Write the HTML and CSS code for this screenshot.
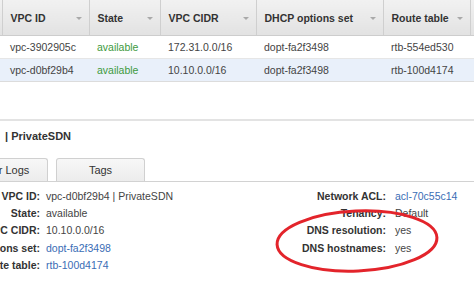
FILE: index.html
```html
<!DOCTYPE html>
<html lang="en">
<head>
  <meta charset="UTF-8">
  <meta name="viewport" content="width=device-width, initial-scale=1.0">
  <title>Your VPCs</title>
  <link rel="stylesheet" href="styles.css">
</head>
<body>
  <table class="vpcTable">
    <colgroup>
      <col class="colEdge">
      <col class="colId">
      <col class="colState">
      <col class="colCidr">
      <col class="colDhcp">
      <col class="colRoute">
      <col class="colMore">
    </colgroup>
    <thead>
      <tr>
        <th></th>
        <th>VPC ID<span class="sortArrow"></span></th>
        <th>State<span class="sortArrow"></span></th>
        <th>VPC CIDR<span class="sortArrow"></span></th>
        <th>DHCP options set<span class="sortArrow"></span></th>
        <th>Route table<span class="sortArrow"></span></th>
        <th></th>
      </tr>
    </thead>
    <tbody>
      <tr>
        <td></td>
        <td>vpc-3902905c</td>
        <td class="available">available</td>
        <td>172.31.0.0/16</td>
        <td>dopt-fa2f3498</td>
        <td>rtb-554ed530</td>
        <td></td>
      </tr>
      <tr class="selected">
        <td></td>
        <td>vpc-d0bf29b4</td>
        <td class="available">available</td>
        <td>10.10.0.0/16</td>
        <td>dopt-fa2f3498</td>
        <td>rtb-100d4174</td>
        <td></td>
      </tr>
    </tbody>
  </table>

  <div class="detailPanel">
    <div class="panelTitle">| PrivateSDN</div>

    <div class="tabs">
      <div class="tab tabFirst">r Logs</div>
      <div class="tab">Tags</div>
    </div>

    <div class="details">
      <dl class="detailList leftList">
        <dt>VPC ID:</dt>
        <dd>vpc-d0bf29b4 | PrivateSDN</dd>
        <dt>State:</dt>
        <dd>available</dd>
        <dt>VPC CIDR:</dt>
        <dd>10.10.0.0/16</dd>
        <dt>DHCP options set:</dt>
        <dd><a href="#">dopt-fa2f3498</a></dd>
        <dt>Route table:</dt>
        <dd><a href="#">rtb-100d4174</a></dd>
      </dl>

      <dl class="detailList rightList">
        <dt>Network ACL:</dt>
        <dd><a href="#">acl-70c55c14</a></dd>
        <dt>Tenancy:</dt>
        <dd>Default</dd>
        <dt>DNS resolution:</dt>
        <dd>yes</dd>
        <dt>DNS hostnames:</dt>
        <dd>yes</dd>
      </dl>
    </div>
  </div>

  <!-- red marker drawn over the DNS settings -->
  <svg class="highlight" width="170" height="74" viewBox="0 0 170 74">
    <ellipse cx="84" cy="37" rx="80" ry="30" transform="rotate(-2.5 84 37)"
             fill="none" stroke="#e3242b" stroke-width="3"/>
  </svg>
</body>
</html>
```

FILE: styles.css
```css
body {
  margin: 0;
  width: 474px;
  height: 290px;
  overflow: hidden;
  position: relative;
  background: #fff;
  font-family: "Liberation Sans", Arial, sans-serif;
  font-size: 10.5px;
  color: #444;
}

a {
  color: #3a6db5;
  text-decoration: none;
}

/* VPC list */
.vpcTable {
  table-layout: fixed;
  border-collapse: collapse;
  width: 478px;
}

.colEdge { width: 2px; }
.colId { width: 87px; }
.colState { width: 71px; }
.colCidr { width: 96px; }
.colDhcp { width: 127px; }
.colRoute { width: 87px; }
.colMore { width: 8px; }

.vpcTable th {
  height: 35px;
  padding: 0 0 0 8px;
  text-align: left;
  font-weight: bold;
  color: #333;
  white-space: nowrap;
  background: linear-gradient(#f1f1f1, #e2e2e2);
  border-left: 1px solid #cfcfcf;
  border-bottom: 1px solid #cdcdcd;
}

.vpcTable th:first-child {
  border-left: none;
  padding: 0;
}

.sortArrow {
  float: right;
  margin: 5px 7px 0 0;
  width: 0;
  height: 0;
  border-left: 3px solid transparent;
  border-right: 3px solid transparent;
  border-top: 3px solid #a9a9a9;
}

.vpcTable td {
  height: 22px;
  padding: 0 0 0 8px;
  white-space: nowrap;
  overflow: hidden;
  color: #444;
  border-bottom: 1px solid #e6e6e6;
}

.vpcTable td:first-child {
  padding: 0;
}

.vpcTable .selected td {
  background: #e9f0fa;
  border-bottom-color: #dcdcdc;
}

.vpcTable .available {
  color: #3d9a3d;
}

/* details panel */
.detailPanel {
  margin-top: 37px;
  border-top: 2px solid #e3e3e3;
}

.panelTitle {
  padding: 9px 0 0 5px;
  height: 28px;
  font-size: 11px;
  font-weight: bold;
  color: #333;
}

.tabs {
  display: flex;
  align-items: flex-end;
  height: 23px;
  border-bottom: 1px solid #d2d2d2;
}

.tab {
  width: 87px;
  height: 22px;
  line-height: 22px;
  margin-left: 8px;
  text-align: center;
  font-size: 11px;
  color: #333;
  background: linear-gradient(#f7f7f7, #ececec);
  border: 1px solid #d0d0d0;
  border-bottom: none;
  border-radius: 3px 3px 0 0;
}

.tabFirst {
  width: 66px;
  margin-left: -20px;
}

.details {
  display: flex;
  align-items: flex-start;
  justify-content: space-between;
  padding-top: 6px;
}

.detailList {
  display: grid;
  column-gap: 6px;
  margin: 0;
  line-height: 17.2px;
}

.detailList dt {
  text-align: right;
  font-weight: bold;
  color: #333;
  white-space: nowrap;
}

.detailList dd {
  margin: 0;
  white-space: nowrap;
}

.leftList {
  grid-template-columns: 140px auto;
  margin-left: -100px;
}

.rightList {
  grid-template-columns: 120px 79px;
  column-gap: 9px;
}

.highlight {
  position: absolute;
  left: 273px;
  top: 204px;
}
```
